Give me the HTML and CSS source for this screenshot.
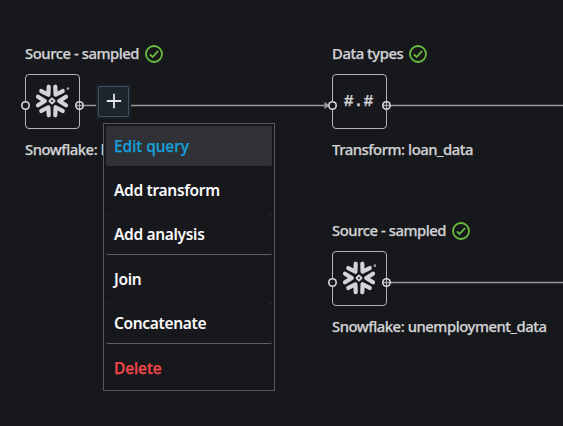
FILE: index.html
```html
<!DOCTYPE html>
<html lang="en">
<head>
<meta charset="utf-8">
<title>Data flow</title>
<link rel="stylesheet" href="styles.css">
</head>
<body>
<svg class="defs" aria-hidden="true">
  <symbol id="check" viewBox="0 0 18 18">
    <circle cx="9" cy="9" r="8" fill="none" stroke="#67bd3f" stroke-width="1.8"/>
    <path d="M4.9 9.3 7.6 12 13 6.2" fill="none" stroke="#67bd3f" stroke-width="1.8"/>
  </symbol>
  <symbol id="flake" viewBox="-18 -18 36 36">
    <g fill="none" stroke="#d3d4d7" stroke-width="4.2" stroke-linecap="round" stroke-linejoin="round">
      <path id="arm" d="M14 -4.3 7.2 0 14 4.3"/>
      <use href="#arm" transform="rotate(60)"/>
      <use href="#arm" transform="rotate(120)"/>
      <use href="#arm" transform="rotate(180)"/>
      <use href="#arm" transform="rotate(240)"/>
      <use href="#arm" transform="rotate(300)"/>
    </g>
    <path d="M0 -2.6 2.6 0 0 2.6 -2.6 0Z" fill="none" stroke="#d3d4d7" stroke-width="1.8" stroke-linejoin="round"/>
    <circle cx="15.9" cy="-12.3" r="1.4" fill="#96979a"/>
  </symbol>
</svg>
<main class="canvas">
  <svg class="edges" viewBox="0 0 563 426" fill="none">
    <path d="M76 105.5H328M383 105.5H563M383 282.5H563" stroke="#96989b" stroke-width="1.3"/>
    <path d="M324.5 102 330 105.5 324.5 109Z" fill="#96989b"/>
  </svg>

  <section class="node node-a">
    <div class="title"><span>Source - sampled</span><svg class="check"><use href="#check"/></svg></div>
    <div class="box"><i class="port left"></i><svg class="flake"><use href="#flake"/></svg><i class="port right"></i></div>
    <div class="caption">Snowflake: l</div>
  </section>

  <section class="node node-b">
    <div class="title"><span>Data types</span><svg class="check"><use href="#check"/></svg></div>
    <div class="box"><i class="port left"></i><span class="hash">#.#</span><i class="port right"></i></div>
    <div class="caption">Transform: loan_data</div>
  </section>

  <section class="node node-c">
    <div class="title"><span>Source - sampled</span><svg class="check"><use href="#check"/></svg></div>
    <div class="box"><i class="port left"></i><svg class="flake"><use href="#flake"/></svg><i class="port right"></i></div>
    <div class="caption">Snowflake: unemployment_data</div>
  </section>

  <button class="add" aria-label="Add"><svg viewBox="0 0 16 16"><path d="M8 .8V15.2M.8 8H15.2" stroke="#e4e6e8" stroke-width="1.8"/></svg></button>

  <nav class="menu">
    <div class="item active"><span>Edit query</span></div>
    <div class="item"><span>Add transform</span></div>
    <div class="item ruled"><span>Add analysis</span></div>
    <div class="item"><span>Join</span></div>
    <div class="item ruled"><span>Concatenate</span></div>
    <div class="item danger"><span>Delete</span></div>
  </nav>
</main>
</body>
</html>
```
FILE: styles.css
```css
* { box-sizing: border-box; }
body { margin: 0; background: #17181c; overflow: hidden; }
.defs { position: absolute; width: 0; height: 0; }
.canvas {
  position: relative;
  width: 563px;
  height: 426px;
  font: 500 14.8px/20px "Noto Sans", "Open Sans", sans-serif;
  letter-spacing: -.44px;
  color: #d1d2d4;
  -webkit-text-stroke: .25px;
}
.edges { position: absolute; inset: 0; width: 563px; height: 426px; }
.node { position: absolute; display: flex; flex-direction: column; white-space: nowrap; }
.node-a { left: 25px; top: 43px; }
.node-b { left: 332px; top: 43px; }
.node-c { left: 332px; top: 220px; }
.title { display: flex; align-items: center; gap: 6px; height: 20px; }
.check { width: 18px; height: 18px; margin-top: 2px; }
.box {
  position: relative;
  display: flex;
  align-items: center;
  justify-content: center;
  width: 55px;
  height: 55px;
  margin: 11px 0 10px;
  border: 1px solid #b4b5b7;
  border-radius: 4px;
}
.caption { overflow: hidden; }
.node-a .caption { width: 78px; }
.flake { width: 36px; height: 36px; margin: -1px 2px 0 0; }
.hash { font: bold 16.5px/20px "Liberation Mono", monospace; letter-spacing: 0; margin: 1px 2px 0 0; }
.port {
  position: absolute;
  top: 26px;
  width: 9px;
  height: 9px;
  border-radius: 50%;
  box-shadow: inset 0 0 0 1.6px #d9dadc;
}
.left { left: -5px; background: #17181c; }
.right { right: -5px; }
.add {
  position: absolute;
  left: 96px;
  top: 84px;
  width: 35px;
  height: 35px;
  padding: 0;
  display: flex;
  align-items: center;
  justify-content: center;
  background: #1c242e;
  border: 2px solid #18222d;
  border-radius: 1px;
}
.add::before { content: ""; position: absolute; inset: 0; border: 1px solid #4a5057; border-radius: 2px; }
.add svg { width: 16px; height: 16px; margin-top: -1px; }
.menu {
  position: absolute;
  left: 103px;
  top: 123px;
  width: 172px;
  height: 268px;
  padding: 2px;
  display: flex;
  flex-direction: column;
  gap: 4px;
  background: #17181c;
  border: 1px solid #55575a;
  color: #fafafa;
  font-size: 15.5px;
  font-weight: 600;
  letter-spacing: -.33px;
  -webkit-text-stroke: 0;
}
.item { display: flex; align-items: center; height: 40px; padding-left: 8px; border-radius: 2px; }
.ruled {
  height: 41px;
  border-bottom: 1px solid #5d5f62;
  background:
    linear-gradient(#303134, #303134) 0 0 / 2px 1px no-repeat,
    linear-gradient(#303134, #303134) 100% 0 / 2px 1px no-repeat;
  border-radius: 0 0 2px 2px;
}
.active { background: #303134; color: #169fdb; font-weight: 500; letter-spacing: -.05px; -webkit-text-stroke: .25px; }
.danger { color: #f5484a; font-weight: 500; letter-spacing: -.1px; -webkit-text-stroke: .25px; }
```
